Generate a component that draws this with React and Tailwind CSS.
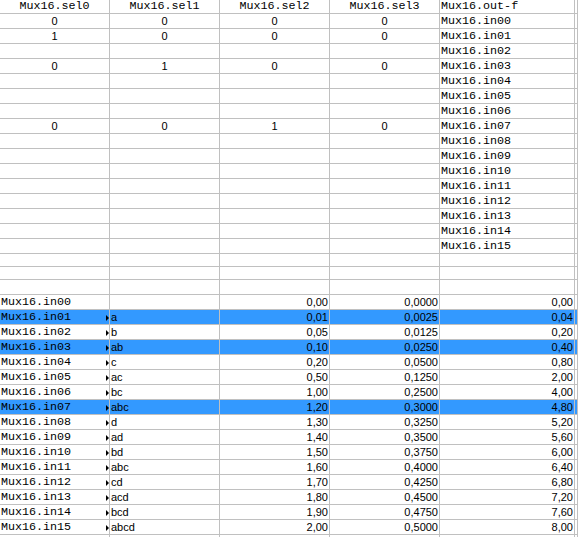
const mono = "font-['Liberation_Mono','Courier_New',monospace] text-[11.7px]"
const sans = "font-['Liberation_Sans',Arial,sans-serif] text-[11px]"

const widths = ['w-[110px]', 'w-[110px]', 'w-[110px]', 'w-[110px]', 'w-[135px]', 'flex-1']

const topRows = [
  ['0', '0', '0', '0', 'Mux16.in00'],
  ['1', '0', '0', '0', 'Mux16.in01'],
  ['', '', '', '', 'Mux16.in02'],
  ['0', '1', '0', '0', 'Mux16.in03'],
  ['', '', '', '', 'Mux16.in04'],
  ['', '', '', '', 'Mux16.in05'],
  ['', '', '', '', 'Mux16.in06'],
  ['0', '0', '1', '0', 'Mux16.in07'],
  ['', '', '', '', 'Mux16.in08'],
  ['', '', '', '', 'Mux16.in09'],
  ['', '', '', '', 'Mux16.in10'],
  ['', '', '', '', 'Mux16.in11'],
  ['', '', '', '', 'Mux16.in12'],
  ['', '', '', '', 'Mux16.in13'],
  ['', '', '', '', 'Mux16.in14'],
  ['', '', '', '', 'Mux16.in15'],
]

const bottomRows = [
  ['Mux16.in00', '', '0,00', '0,0000', '0,00'],
  ['Mux16.in01', 'a', '0,01', '0,0025', '0,04', true],
  ['Mux16.in02', 'b', '0,05', '0,0125', '0,20'],
  ['Mux16.in03', 'ab', '0,10', '0,0250', '0,40', true],
  ['Mux16.in04', 'c', '0,20', '0,0500', '0,80'],
  ['Mux16.in05', 'ac', '0,50', '0,1250', '2,00'],
  ['Mux16.in06', 'bc', '1,00', '0,2500', '4,00'],
  ['Mux16.in07', 'abc', '1,20', '0,3000', '4,80', true],
  ['Mux16.in08', 'd', '1,30', '0,3250', '5,20'],
  ['Mux16.in09', 'ad', '1,40', '0,3500', '5,60'],
  ['Mux16.in10', 'bd', '1,50', '0,3750', '6,00'],
  ['Mux16.in11', 'abc', '1,60', '0,4000', '6,40'],
  ['Mux16.in12', 'cd', '1,70', '0,4250', '6,80'],
  ['Mux16.in13', 'acd', '1,80', '0,4500', '7,20'],
  ['Mux16.in14', 'bcd', '1,90', '0,4750', '7,60'],
  ['Mux16.in15', 'abcd', '2,00', '0,5000', '8,00'],
]

function Cell({ i, className = '', children }) {
  return (
    <div
      className={`${widths[i]} shrink-0 relative flex items-center pt-[1px] border-r border-b border-[#c0c0c0] overflow-hidden whitespace-nowrap leading-none ${className}`}
    >
      {children}
    </div>
  )
}

function EmptyRow({ h }) {
  return (
    <div className={`flex ${h}`}>
      {widths.map((w, i) => (
        <Cell key={i} i={i} />
      ))}
    </div>
  )
}

export default function App() {
  return (
    <div className="w-[578px] h-[537px] bg-white text-black overflow-hidden">
      {/* header row, top clipped */}
      <div className={`flex h-[14px] ${mono}`}>
        {['Mux16.sel0', 'Mux16.sel1', 'Mux16.sel2', 'Mux16.sel3'].map((t, i) => (
          <Cell key={t} i={i} className="justify-center">{t}</Cell>
        ))}
        <Cell i={4} className="pl-[1px]">Mux16.out-f</Cell>
        <Cell i={5} />
      </div>

      {topRows.map((r, k) => (
        <div key={k} className="flex h-[15px]">
          {r.slice(0, 4).map((v, i) => (
            <Cell key={i} i={i} className={`justify-center ${sans}`}>{v}</Cell>
          ))}
          <Cell i={4} className={`pl-[1px] ${mono}`}>{r[4]}</Cell>
          <Cell i={5} />
        </div>
      ))}

      <EmptyRow h="h-[13px]" />
      <EmptyRow h="h-[13px]" />
      <EmptyRow h="h-[15px]" />

      {bottomRows.map((r, k) => {
        const sel = r[5]
        return (
          <div key={k} className={`flex h-[15px] ${sel ? 'bg-[#3399ff]' : ''}`}>
            <Cell i={0} className={`pl-[1px] ${mono}`}>
              {r[0]}
              {r[1] && (
                <span className="absolute right-0 top-[5px] w-0 h-0 border-y-[3px] border-y-transparent border-l-[3px] border-l-black" />
              )}
            </Cell>
            <Cell i={1} className={`pl-[1px] ${sans}`}>{r[1]}</Cell>
            <Cell i={2} className={`justify-end pr-[1px] ${sans}`}>{r[2]}</Cell>
            <Cell i={3} className={`justify-end pr-[1px] ${sans}`}>{r[3]}</Cell>
            <Cell i={4} className={`justify-end pr-[1px] ${sans}`}>{r[4]}</Cell>
            <Cell i={5} />
          </div>
        )
      })}

      <EmptyRow h="h-[15px]" />
    </div>
  )
}
